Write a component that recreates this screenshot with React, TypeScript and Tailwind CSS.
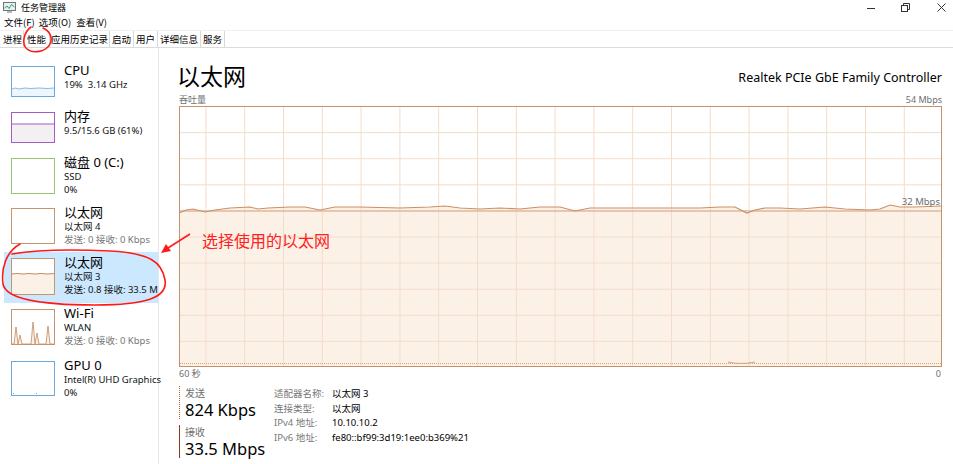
import React from "react";

const W = 761;
const H = 259;

const wave: [number, number][] = [
  [179, 213], [186, 210], [193, 209], [205, 212], [215, 210], [230, 208], [250, 207], [258, 209],
  [268, 208], [290, 207], [305, 207], [320, 210], [335, 207], [360, 207], [400, 208], [430, 207],
  [445, 206], [460, 208], [480, 209], [500, 208], [520, 209], [540, 207], [560, 207], [575, 211],
  [590, 208], [620, 208], [660, 208], [700, 208], [720, 207], [735, 207], [747, 213], [755, 210],
  [765, 208], [780, 208], [800, 209], [825, 207], [845, 209], [870, 210], [880, 209], [890, 205],
  [900, 207], [915, 207], [941, 206],
];

function Graph() {
  const vlines = Array.from({ length: 19 }, (_, k) => 25.9 + 38.8 * k);
  const hlines = Array.from({ length: 9 }, (_, k) => 26.1 * (k + 1) - 0.5);
  const pts = wave.map(([x, y]) => [x - 180, y - 107]);
  const line = pts.map(([x, y]) => `${x},${y}`).join(" ");
  const area = `0,${H} ${line} ${W},${H}`;
  return (
    <div className="relative h-[261px] border border-[#c4916a] bg-white">
      <svg width={W} height={H} className="block">
        <polygon points={area} fill="#fcf1e7" />
        {vlines.map((x, i) => (
          <line key={"v" + i} x1={x} y1={0} x2={x} y2={H} stroke="#f3ddca" strokeWidth={1} />
        ))}
        {hlines.map((y, i) => (
          <line key={"h" + i} x1={0} y1={y} x2={W} y2={y} stroke="#f3ddca" strokeWidth={1} />
        ))}
        <line x1={0} y1={104} x2={W} y2={104} stroke="#d6a581" strokeWidth={1} />
        <polyline points={line} fill="none" stroke="#c99068" strokeWidth={1.2} />
        <line x1={0} y1={256.5} x2={W} y2={256.5} stroke="#d9a27a" strokeWidth={1} strokeDasharray="1 1" />
        <path d="M548 255 Q 560 258 575 255" fill="none" stroke="#d9a27a" strokeWidth={1} />
      </svg>
      <div className="absolute right-[1px] top-[89px] text-[9.5px] leading-[12px] text-[#6b6b6b]">32 Mbps</div>
    </div>
  );
}

function Thumb({
  border,
  h,
  children,
}: {
  border: string;
  h: number;
  children?: React.ReactNode;
}) {
  return (
    <svg width={44} height={h} className="block shrink-0">
      <rect x={0.5} y={0.5} width={43} height={h - 1} fill="white" stroke={border} strokeWidth={1} />
      {children}
    </svg>
  );
}

function Item({
  cls,
  selected,
  thumb,
  title,
  lines,
  grayLast,
}: {
  cls: string;
  selected?: boolean;
  thumb: React.ReactNode;
  title: string;
  lines: string[];
  grayLast?: boolean;
}) {
  return (
    <div className={`flex items-start ${cls} ${selected ? "ml-[4px] pl-[7px] bg-[#cce8ff]" : "pl-[11px]"}`}>
      <div className="mt-[6px]">{thumb}</div>
      <div className="ml-[9px] mt-[3px] flex flex-col whitespace-nowrap">
        <div className="text-[13px] leading-[15px] text-black">{title}</div>
        {lines.map((l, i) => (
          <div
            key={i}
            className={`text-[9.5px] leading-[13px] ${grayLast && i === lines.length - 1 ? "text-[#777777]" : "text-[#111111]"}`}
          >
            {l}
          </div>
        ))}
      </div>
    </div>
  );
}

export default function App() {
  return (
    <div className="relative w-[953px] h-[464px] overflow-hidden bg-white font-['Noto_Sans','Noto_Sans_CJK_SC',sans-serif] text-black">
      {/* Title bar */}
      <div className="flex h-[15px] items-center">
        <svg width={13} height={11} className="ml-[3px]">
          <rect x={0.5} y={0.5} width={12} height={8} fill="#e8eef2" stroke="#6b7680" />
          <polyline points="1.5,6 4,4 6,6.5 8.5,2.5 11.5,5" fill="none" stroke="#2fa84f" strokeWidth={1} />
          <rect x={4} y={9.5} width={5} height={1} fill="#6b7680" />
        </svg>
        <div className="ml-[5px] text-[9px] leading-[15px] font-['Noto_Sans_CJK_SC',sans-serif]">任务管理器</div>
        <div className="ml-auto flex items-center pr-[7px]">
          <svg width={8} height={8}><line x1={0} y1={4.5} x2={8} y2={4.5} stroke="#333" /></svg>
          <svg width={9} height={9} className="ml-[26px]">
            <rect x={0.5} y={2.5} width={6} height={6} fill="none" stroke="#333" />
            <polyline points="2.5,2.5 2.5,0.5 8.5,0.5 8.5,6.5 6.5,6.5" fill="none" stroke="#333" />
          </svg>
          <svg width={9} height={9} className="ml-[27px]">
            <line x1={0.5} y1={0.5} x2={8.5} y2={8.5} stroke="#333" />
            <line x1={8.5} y1={0.5} x2={0.5} y2={8.5} stroke="#333" />
          </svg>
        </div>
      </div>

      {/* Menu bar */}
      <div className="flex h-[15px] items-center pl-[4px] text-[9.5px] leading-[15px] font-['Noto_Sans_CJK_SC',sans-serif]">
        <span>文件(F)</span>
        <span className="ml-[4px]">选项(O)</span>
        <span className="ml-[5px]">查看(V)</span>
      </div>

      {/* Tabs */}
      <div className="flex h-[18px] items-end border-t border-b border-t-[#f0f0f0] border-b-[#dcdcdc] pl-[2px] text-[9.5px] font-['Noto_Sans_CJK_SC',sans-serif]">
        <div className="h-[16px] border-r border-[#d9d9d9] px-[1px] leading-[16px]">进程</div>
        <div className="h-[16px] border-r border-[#d9d9d9] bg-white px-[3px] leading-[16px]">性能</div>
        <div className="h-[16px] border-r border-[#d9d9d9] px-[1px] leading-[16px]">应用历史记录</div>
        <div className="h-[16px] border-r border-[#d9d9d9] px-[2px] leading-[16px]">启动</div>
        <div className="h-[16px] border-r border-[#d9d9d9] px-[2px] leading-[16px]">用户</div>
        <div className="h-[16px] border-r border-[#d9d9d9] px-[2px] leading-[16px]">详细信息</div>
        <div className="h-[16px] border-r border-[#d9d9d9] px-[2px] leading-[16px]">服务</div>
      </div>

      {/* Body */}
      <div className="flex h-[416px]">
        {/* Sidebar */}
        <div className="w-[159px] shrink-0 border-r border-[#e5e5e5] pt-[12px]">
          <Item
            cls="h-[46px]"
            title="CPU"
            lines={["19%\u00a0\u00a03.14 GHz"]}
            thumb={
              <Thumb border="#6aa9d9" h={31}>
                <polygon points="1,23 4,22 8,23 14,22 20,22.5 28,22 36,22.5 43,22 43,30 1,30" fill="#eef5fb" />
                <polyline points="1,23 4,22 8,23 14,22 20,22.5 28,22 36,22.5 43,22" fill="none" stroke="#6aa9d9" strokeWidth={0.8} />
              </Thumb>
            }
          />
          <Item
            cls="h-[46px]"
            title="内存"
            lines={["9.5/15.6 GB (61%)"]}
            thumb={
              <Thumb border="#a45cc4" h={31}>
                <rect x={1} y={12} width={42} height={18} fill="#f3f0f3" />
                <line x1={1} y1={12} x2={43} y2={12} stroke="#a45cc4" strokeWidth={1} />
              </Thumb>
            }
          />
          <Item
            cls="h-[50px]"
            title="磁盘 0 (C:)"
            lines={["SSD", "0%"]}
            thumb={<Thumb border="#93c66f" h={36} />}
          />
          <Item
            cls="h-[50px]"
            title="以太网"
            lines={["以太网 4", "发送: 0 接收: 0 Kbps"]}
            grayLast
            thumb={<Thumb border="#c39670" h={36} />}
          />
          <Item
            cls="h-[51px]"
            selected
            title="以太网"
            lines={["以太网 3", "发送: 0.8 接收: 33.5 M"]}
            thumb={
              <Thumb border="#c39670" h={37}>
                <rect x={1} y={16} width={42} height={20} fill="#fcf1e6" />
                <polyline points="1,16 6,15.5 12,16 18,15.5 24,16 30,15.5 36,16 43,15.5" fill="none" stroke="#c48a60" strokeWidth={1} />
              </Thumb>
            }
          />
          <Item
            cls="h-[52px]"
            title="Wi-Fi"
            lines={["WLAN", "发送: 0 接收: 0 Kbps"]}
            grayLast
            thumb={
              <Thumb border="#c39670" h={36}>
                <polygon points="3,35 5,18 7,35 9,26 11,35 20,35 22,13 24,35 26,24 28,35 35,35 37,17 39,35" fill="#fbeee3" />
                <polyline points="1,35 3,35 5,18 7,35 9,26 11,35 20,35 22,13 24,35 26,24 28,35 35,35 37,17 39,35 43,35" fill="none" stroke="#c48a60" strokeWidth={0.8} />
              </Thumb>
            }
          />
          <Item
            cls="h-[50px]"
            title="GPU 0"
            lines={["Intel(R) UHD Graphics", "0%"]}
            thumb={
              <Thumb border="#6aa9d9" h={35}>
                <rect x={2} y={32} width={1} height={1} fill="#6aa9d9" />
                <rect x={25} y={32} width={1} height={1} fill="#6aa9d9" />
              </Thumb>
            }
          />
        </div>

        {/* Main */}
        <div className="flex min-w-0 flex-1 flex-col pl-[20px] pr-[11px] pt-[11px]">
          <div className="flex h-[34px] items-center justify-between">
            <div className="-ml-[2px] -mt-[3px] text-[23px] leading-[30px] font-['Noto_Sans_CJK_SC',sans-serif]">以太网</div>
            <div className="mt-[4px] text-[12.5px] leading-[18px]">Realtek PCIe GbE Family Controller</div>
          </div>
          <div className="flex h-[13px] items-center justify-between text-[9px] leading-[13px] text-[#707070]">
            <span>吞吐量</span>
            <span>54 Mbps</span>
          </div>
          <Graph />
          <div className="flex h-[13px] items-center justify-between text-[9px] leading-[13px] text-[#707070]">
            <span>60 秒</span>
            <span className="pr-[1px]">0</span>
          </div>
          <div className="mt-[6px] flex">
            <div className="flex w-[95px] shrink-0 flex-col">
              <div className="h-[33px] border-l border-dotted border-[#c0603a] pl-[5px]">
                <div className="text-[10px] leading-[14px] text-[#707070]">发送</div>
                <div className="text-[16.5px] leading-[19px] whitespace-nowrap">824 Kbps</div>
              </div>
              <div className="mt-[6px] h-[33px] border-l border-[#8a3a20] pl-[5px]">
                <div className="text-[10px] leading-[14px] text-[#707070]">接收</div>
                <div className="text-[16.5px] leading-[19px] whitespace-nowrap">33.5 Mbps</div>
              </div>
            </div>
            <div className="mt-[1px] grid grid-cols-[58px_auto] content-start text-[9.5px] leading-[14.5px]">
              <span className="text-[#777777]">适配器名称:</span>
              <span>以太网 3</span>
              <span className="text-[#777777]">连接类型:</span>
              <span>以太网</span>
              <span className="text-[#777777]">IPv4 地址:</span>
              <span>10.10.10.2</span>
              <span className="text-[#777777]">IPv6 地址:</span>
              <span>fe80::bf99:3d19:1ee0:b369%21</span>
            </div>
          </div>
        </div>
      </div>

      {/* Red annotations */}
      <svg width={953} height={464} className="pointer-events-none absolute left-0 top-0">
        <path
          d="M31 27 C 24 32, 21 44, 27 49 C 33 54, 46 52, 50 44 C 53 38, 50 31, 43 28"
          fill="none"
          stroke="#ff1a1a"
          strokeWidth={1.6}
          strokeLinecap="round"
        />
        <path
          d="M20 244 C 6 252, 1 268, 3 284 C 6 300, 45 305, 95 305 C 145 305, 168 298, 165 280 C 162 262, 150 253, 110 251 C 70 249, 35 250, 12 254"
          fill="none"
          stroke="#ff1a1a"
          strokeWidth={1.6}
          strokeLinecap="round"
        />
        <line x1={190} y1={234} x2={168} y2={248} stroke="#ff1a1a" strokeWidth={1.5} />
        <polygon points="161,253 166,244 171,251" fill="#ff1a1a" />
      </svg>
      <div className="pointer-events-none absolute left-[202px] top-[230px] text-[16px] leading-[20px] text-[#ff2020] font-['Noto_Sans_CJK_SC',sans-serif]">
        选择使用的以太网
      </div>
    </div>
  );
}
